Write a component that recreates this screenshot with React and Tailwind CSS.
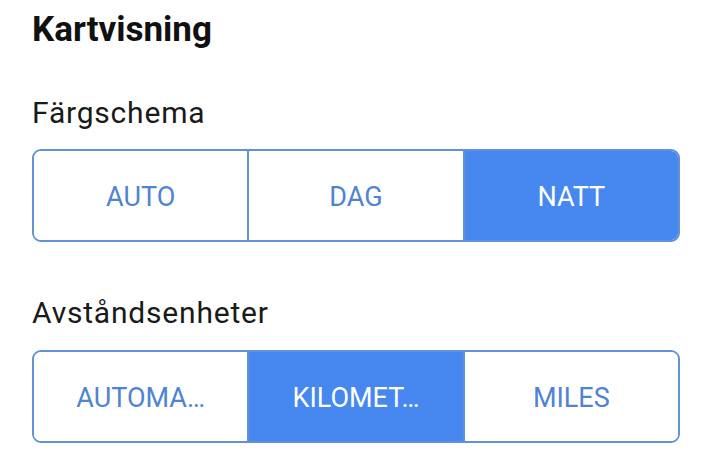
const Segmented = ({ options, selected }) => (
  <div className="flex h-[93px] rounded-[9px] border-2 border-[#6391d6] overflow-hidden">
    {options.map((opt, i) => (
      <div
        key={opt}
        className={
          "flex-1 flex items-center justify-center pt-[3px] text-[27px] " +
          (i > 0 ? "border-l-2 border-[#6391d6] " : "") +
          (i === selected ? "bg-[#4687f0] text-white" : "bg-white text-[#4f83d3]")
        }
      >
        {opt}
      </div>
    ))}
  </div>
);

export default function App() {
  return (
    <div className="w-[711px] h-[470px] bg-white pl-[32px] pr-[31px] pt-[10px] font-['Roboto',sans-serif]">
      <h1 className="text-[35px] leading-[40px] font-bold text-[#111]">Kartvisning</h1>
      <div className="mt-[46px] text-[30px] leading-[34px] tracking-[0.8px] text-[#1a1a1a]">Färgschema</div>
      <div className="mt-[19px]">
        <Segmented options={["AUTO", "DAG", "NATT"]} selected={2} />
      </div>
      <div className="mt-[54px] text-[30px] leading-[34px] tracking-[0.8px] text-[#1a1a1a]">Avståndsenheter</div>
      <div className="mt-[20px]">
        <Segmented options={["AUTOMA…", "KILOMET…", "MILES"]} selected={1} />
      </div>
    </div>
  );
}
